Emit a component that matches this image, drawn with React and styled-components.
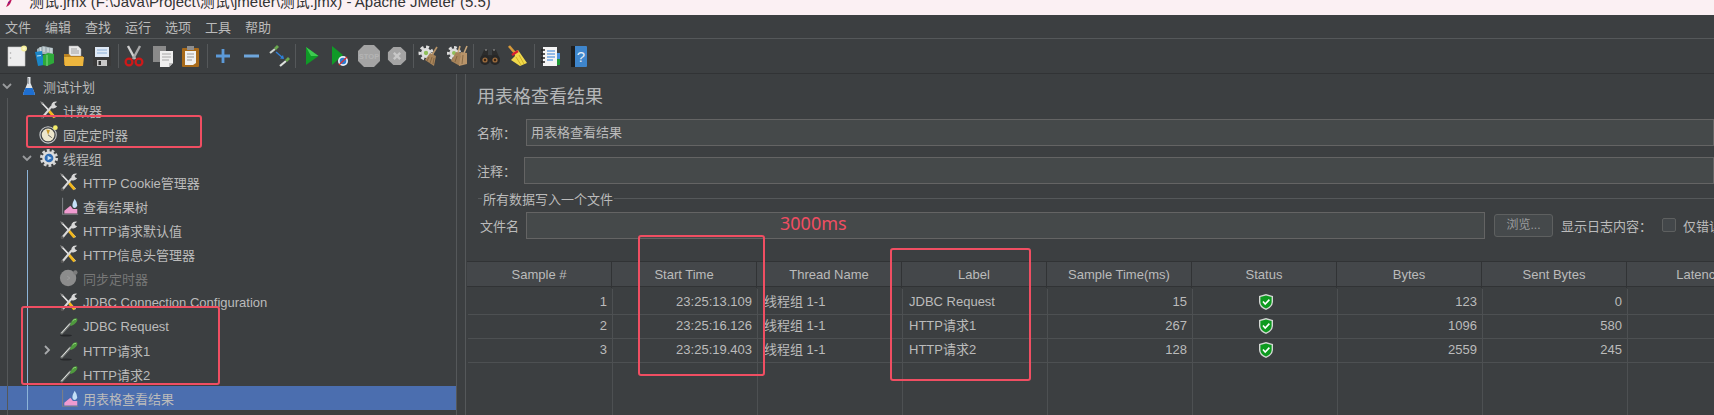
import { Fragment } from "react";
import styled, { createGlobalStyle } from "styled-components";

const CJK = '"Noto Sans CJK SC", sans-serif';

const GlobalStyle = createGlobalStyle`
  html, body {
    margin: 0;
    padding: 0;
    background: #3c3f41;
  }
  * {
    box-sizing: border-box;
  }
`;

// ==================== Shell ====================
const Page = styled.div`
  position: relative;
  width: 1714px;
  height: 415px;
  overflow: hidden;
  background: #3c3f41;
  color: #bbbbbb;
  font-family: "Liberation Sans", ${CJK};
  font-size: 13px;
  display: flex;
  flex-direction: column;
`;

const TitleBar = styled.div`
  height: 15px;
  flex: none;
  display: flex;
  align-items: flex-end;
  overflow: hidden;
  background: #fbf0f3;
  padding-left: 5px;
`;

const TitleText = styled.div`
  margin-left: 15px;
  font-size: 15px;
  line-height: 22px;
  margin-bottom: 2px;
  color: #333;
  white-space: nowrap;
`;

const MenuBar = styled.div`
  height: 23px;
  flex: none;
  display: flex;
  align-items: flex-start;
  padding-left: 5px;
  gap: 14px;
`;

const MenuItem = styled.div`
  width: 26px;
  line-height: 25px;
  font-size: 13px;
  white-space: nowrap;
`;

const Toolbar = styled.div`
  height: 36px;
  flex: none;
  display: flex;
  align-items: center;
  padding-left: 3px;
  border-top: 1px solid #55585a;
  border-bottom: 1px solid #313335;
`;

const ToolButton = styled.div`
  width: 28.3px;
  height: 24px;
  display: flex;
  align-items: center;
  justify-content: center;
`;

const ToolSep = styled.div`
  width: 1px;
  height: 24px;
  margin: 0 1.5px;
  background: #55585a;
`;

const Body = styled.div`
  flex: 1;
  display: flex;
  min-height: 0;
`;

// ==================== Tree ====================
const Tree = styled.div`
  position: relative;
  width: 457px;
  flex: none;
  border-right: 1px solid #55585a;
`;

const TreeRow = styled.div`
  height: 24px;
  display: flex;
  align-items: center;
  padding-left: ${({ $level }) => $level * 20 + 1}px;
  background: ${({ $selected }) => ($selected ? "#4b6eaf" : "transparent")};
  color: ${({ $disabled }) => ($disabled ? "#777777" : "#bbbbbb")};
  white-space: nowrap;
`;

const Chevron = styled.div`
  width: 12px;
  height: 12px;
  flex: none;
  margin-right: 5px;
  display: flex;
  align-items: center;
  justify-content: center;
`;

const TreeIcon = styled.div`
  width: 22px;
  height: 22px;
  flex: none;
  margin-right: 3px;
  display: flex;
  align-items: center;
  justify-content: center;
`;

const Guide = styled.div`
  position: absolute;
  width: 1px;
  left: ${({ $left }) => $left}px;
  top: ${({ $top }) => $top}px;
  bottom: ${({ $bottom }) => $bottom}px;
  background: ${({ $color }) => $color};
`;

// ==================== Result panel ====================
const Pane = styled.div`
  flex: 1;
  min-width: 0;
  margin-left: 8px;
  border-left: 1px solid #55585a;
  display: flex;
  flex-direction: column;
`;

const Form = styled.div`
  padding-left: 11px;
  display: flex;
  flex-direction: column;
`;

const PaneTitle = styled.div`
  height: 45px;
  font-size: 18px;
  line-height: 47px;
  color: #b4b6b8;
`;

const FieldRow = styled.div`
  display: flex;
  align-items: center;
  height: 27px;
  margin-bottom: ${({ $gap }) => $gap || 0}px;
`;

const FieldLabel = styled.div`
  flex: none;
  width: ${({ $width }) => $width}px;
  padding-left: ${({ $indent }) => $indent || 0}px;
  white-space: nowrap;
`;

const TextInput = styled.div`
  flex: ${({ $fixed }) => ($fixed ? "none" : "1")};
  width: ${({ $fixed }) => ($fixed ? `${$fixed}px` : "auto")};
  height: 27px;
  padding-left: 4px;
  line-height: 25px;
  background: #45494a;
  border: 1px solid #646464;
`;

const Legend = styled.div`
  height: 14px;
  margin: 7px 0 7px 1px;
  display: flex;
  align-items: center;
  gap: 1px;
`;

const LegendLine = styled.div`
  height: 1px;
  background: #55585a;
  flex: ${({ $grow }) => ($grow ? "1" : "none")};
  width: ${({ $grow }) => ($grow ? "auto" : "4px")};
`;

const BrowseButton = styled.div`
  flex: none;
  width: 59px;
  height: 23px;
  margin-left: 9px;
  border: 1px solid #5e6060;
  border-radius: 3px;
  background: #45494b;
  color: #9a9c9e;
  font-size: 12px;
  line-height: 21px;
  text-align: center;
`;

const LogLabel = styled.div`
  flex: none;
  width: 101px;
  margin-left: 8px;
  white-space: nowrap;
`;

const CheckBox = styled.div`
  flex: none;
  width: 14px;
  height: 14px;
  margin-top: -2px;
  border: 1px solid #5e6060;
  border-radius: 2px;
  background: #43474a;
`;

const CheckLabel = styled.div`
  margin-left: 7px;
  white-space: nowrap;
`;

// ==================== Table ====================
const Table = styled.div`
  margin-top: 22px;
  margin-left: 1px;
  flex: 1;
  display: flex;
  flex-direction: column;
  min-height: 0;
`;

const HeaderRow = styled.div`
  display: grid;
  grid-template-columns: repeat(9, 145px);
  height: 26px;
  flex: none;
  background: #44474a;
  border-top: 1px solid #313335;
  border-bottom: 1px solid #313335;
`;

const HeaderCell = styled.div`
  text-align: center;
  line-height: 26px;
  border-right: 1px solid #313335;
  white-space: nowrap;
`;

const DataRows = styled.div`
  margin-top: 2px;
  margin-left: 1px;
`;

const DataRow = styled.div`
  display: grid;
  grid-template-columns: repeat(9, 145px);
  height: ${({ $height }) => $height || 24}px;
`;

const DataCell = styled.div`
  border-right: 1px solid #4d5052;
  border-bottom: ${({ $open }) => ($open ? "none" : "1px solid #4d5052")};
  padding: 0 5px 0 6px;
  line-height: 25px;
  text-align: ${({ $align }) => $align || "left"};
  white-space: nowrap;
  display: ${({ $center }) => ($center ? "flex" : "block")};
  align-items: center;
  justify-content: center;
`;

// ==================== Annotations ====================
const Mark = styled.div`
  position: absolute;
  left: ${({ $x }) => $x}px;
  top: ${({ $y }) => $y}px;
  width: ${({ $w }) => $w}px;
  height: ${({ $h }) => $h}px;
  border: 2px solid #f04e62;
  border-radius: 3px;
  pointer-events: none;
`;

const MarkNote = styled.div`
  position: absolute;
  left: 780px;
  top: 210px;
  font-family: "Noto Sans", sans-serif;
  font-size: 18px;
  line-height: 26px;
  color: #f04e62;
`;

// ==================== Icons ====================
const Svg = ({ size = 22, children }) => (
  <svg width={size} height={size} viewBox="0 0 22 22">
    {children}
  </svg>
);

const FeatherSvg = styled.svg`
  flex: none;
  margin-bottom: 8px;
`;

const FeatherIcon = () => (
  <FeatherSvg width="9" height="8" viewBox="0 0 9 8">
    <path d="M7 0 C4 1 3 3 2 6 L1 8 L3 7 C5 6 6 3 7 0Z" fill="#c2185b" />
    <path d="M3 4 L5 3" stroke="#6a1b9a" strokeWidth="1" />
  </FeatherSvg>
);

const DownArrow = () => (
  <svg width="12" height="12" viewBox="0 0 12 12">
    <path d="M2 4 L6 8 L10 4" fill="none" stroke="#9a9c9e" strokeWidth="1.8" />
  </svg>
);

const RightArrow = () => (
  <svg width="12" height="12" viewBox="0 0 12 12">
    <path d="M4 2 L8 6 L4 10" fill="none" stroke="#a8aaac" strokeWidth="1.8" />
  </svg>
);

const NewIcon = () => (
  <Svg>
    <path d="M2 2 H19 V21 H2Z" fill="#eeeeee" stroke="#c8c8c8" strokeWidth="0.6" />
    <circle cx="4.5" cy="8" r="0.8" fill="#aaa" />
    <circle cx="4.5" cy="13" r="0.8" fill="#aaa" />
    <circle cx="18" cy="3.5" r="3" fill="#f5ee9a" />
    <circle cx="18" cy="3.5" r="1.6" fill="#fff9c4" />
  </Svg>
);

const TemplatesIcon = () => (
  <Svg>
    <path d="M3 4 L9 1 L19 3 L19 9 L3 9Z" fill="#a4b2b8" />
    <path d="M6 2 L7 7 M10 2 L10 7 M14 3 L14 7 M17 3 L17 8" stroke="#d8e0e2" strokeWidth="1.2" />
    <path d="M1 7 L8 6 L10 20 L4 21Z" fill="#1a86c8" />
    <path d="M9 10 L14 8 L20 9 L20 18 L13 21 L9 20Z" fill="#2eaa3a" />
    <path d="M13 10 L13 21" stroke="#77d37b" strokeWidth="1.2" />
    <path d="M3 11 L7 10.5" stroke="#bfe4f6" strokeWidth="1.2" />
  </Svg>
);

const OpenIcon = () => (
  <Svg>
    <path d="M6 1 H15 L18 4 V11 H6Z" fill="#e8e8e8" stroke="#a8a8a8" strokeWidth="0.5" />
    <path d="M8 4 H14 M8 6 H16 M8 8 H16" stroke="#8f8f8f" strokeWidth="0.8" />
    <path d="M1 9 H6 L8 11 H20 V20 H1Z" fill="#b98222" />
    <path d="M1 12 H21 L20 21 H2Z" fill="#edb63e" />
  </Svg>
);

const SaveIcon = () => (
  <Svg>
    <path d="M2 2 H20 V21 H2Z" fill="#3a3a3a" />
    <rect x="4" y="2" width="14" height="10" fill="#dfe9f5" />
    <path d="M6 5 H16 M6 8 H16" stroke="#8cb0d8" strokeWidth="1" />
    <rect x="6" y="15" width="10" height="6" fill="#c8c8c8" />
    <rect x="7.5" y="16" width="2.5" height="4" fill="#333" />
  </Svg>
);

const CutIcon = () => (
  <Svg>
    <path d="M5 1 L12 14" stroke="#d0d0d0" strokeWidth="2.4" />
    <path d="M17 1 L10 14" stroke="#a8a8a8" strokeWidth="2.4" />
    <circle cx="6" cy="17" r="3.4" fill="none" stroke="#d01818" strokeWidth="2.2" />
    <circle cx="16" cy="17" r="3.4" fill="none" stroke="#d01818" strokeWidth="2.2" />
  </Svg>
);

const CopyIcon = () => (
  <Svg>
    <rect x="1" y="1" width="13" height="16" fill="#8a8a8a" />
    <path d="M8 6 H21 V18 L17 22 H8Z" fill="#efefef" />
    <path d="M10 9 H19 M10 12 H19 M10 15 H17" stroke="#a0a0a0" strokeWidth="0.9" />
    <path d="M17 22 V18 H21Z" fill="#bdbdbd" />
  </Svg>
);

const PasteIcon = () => (
  <Svg>
    <rect x="2" y="3" width="17" height="19" rx="1" fill="#a86a1a" />
    <rect x="7" y="1" width="7" height="4" fill="#8e8e8e" />
    <path d="M5 6 H16 V18 L13 20 H5Z" fill="#f0f0f0" />
    <path d="M7 9 H14 M7 12 H14 M7 15 H12" stroke="#909090" strokeWidth="0.9" />
  </Svg>
);

const PlusIcon = () => (
  <Svg>
    <path d="M11 4 V18 M4 11 H18" stroke="#5c9ad8" strokeWidth="2.8" />
  </Svg>
);

const MinusIcon = () => (
  <Svg>
    <path d="M3 11 H18" stroke="#6ea6dc" strokeWidth="3" />
  </Svg>
);

const ToggleIcon = () => (
  <Svg>
    <path d="M1 8 L6 4" stroke="#cfd4cf" strokeWidth="2.2" />
    <path d="M6 4 L9 1" stroke="#6aa84f" strokeWidth="2.8" />
    <path d="M11 21 L17 16" stroke="#dfe2df" strokeWidth="2.2" />
    <path d="M17 16 L20 13" stroke="#6aa84f" strokeWidth="2.8" />
    <path d="M7 7 L14 13" stroke="#2f80d8" strokeWidth="1.4" />
    <path d="M15 14 L11 13.5 L14 10Z" fill="#2f80d8" />
  </Svg>
);

const PlayIcon = () => (
  <Svg>
    <path d="M5 2 L17.5 11 L5 20Z" fill="#109a27" />
    <path d="M5 2 L17.5 11 L10 11Z" fill="#3ecb50" />
  </Svg>
);

const PlayNoPauseIcon = () => (
  <Svg>
    <path d="M3 1 L14 10 L3 20Z" fill="#109a27" />
    <circle cx="14" cy="16" r="5" fill="#e8f0fa" />
    <circle cx="14" cy="16" r="3.3" fill="#2c7dd2" />
    <path d="M10 20 L18 12" stroke="#d83030" strokeWidth="1.3" />
  </Svg>
);

const StopIcon = () => (
  <svg width="24" height="24" viewBox="0 0 24 24">
    <path d="M7 1 H17 L23 7 V17 L17 23 H7 L1 17 V7Z" fill="#a4a4a4" />
    <text x="12" y="15" textAnchor="middle" fontSize="7.5" fontWeight="700" fill="#b4b4b4" fontFamily="Liberation Sans, sans-serif">
      STOP
    </text>
  </svg>
);

const ShutdownIcon = () => (
  <Svg size={20}>
    <path d="M7 1 H15 L21 7 V15 L15 21 H7 L1 15 V7Z" fill="#a4a4a4" />
    <path d="M7.5 7.5 L14.5 14.5 M14.5 7.5 L7.5 14.5" stroke="#c8c8c8" strokeWidth="2.6" />
  </Svg>
);

const Gear = ({ cx, cy, r, fill = "#dedede", hub = "#8fbf5a" }) => (
  <g>
    <circle cx={cx} cy={cy} r={r} fill="none" stroke={fill} strokeWidth={r * 0.5} strokeDasharray={`${r * 0.5} ${r * 0.42}`} />
    <circle cx={cx} cy={cy} r={r * 0.82} fill={fill} />
    <circle cx={cx} cy={cy} r={r * 0.36} fill={hub} />
  </g>
);

const ClearIcon = () => (
  <Svg>
    <Gear cx={8} cy={8} r={6} />
    <path d="M19 2 L14 10" stroke="#b89468" strokeWidth="1.6" />
    <path d="M12 8 L18 11 L16 21 L7 15Z" fill="#a8845a" />
    <path d="M11 12 L9 16 M14 12 L12 18 M16 13 L15 19" stroke="#7b5f3e" strokeWidth="0.8" />
  </Svg>
);

const ClearAllIcon = () => (
  <Svg>
    <Gear cx={7} cy={8} r={5.6} />
    <path d="M13 1 L11 8 M20 1 L17 8" stroke="#c8a67a" strokeWidth="1.6" />
    <path d="M9 7 L14 8 L13 21 L4 16Z" fill="#a8845a" />
    <path d="M14 7 L20 8 L20 19 L12 21Z" fill="#b8946a" />
    <path d="M10 11 L8 17 M16 10 L15 19" stroke="#7b5f3e" strokeWidth="0.8" />
  </Svg>
);

const BinocularIcon = () => (
  <Svg>
    <path d="M5 5 H9 V10 H13 V5 H17 L21 14 H1Z" fill="#2c2c2c" />
    <circle cx="6" cy="15" r="5" fill="#272727" />
    <circle cx="16" cy="15" r="5" fill="#272727" />
    <circle cx="6" cy="15" r="2.6" fill="#9a6a3c" />
    <circle cx="16" cy="15" r="2.6" fill="#9a6a3c" />
    <circle cx="6" cy="15" r="1.2" fill="#3a2514" />
    <circle cx="16" cy="15" r="1.2" fill="#3a2514" />
    <path d="M6 5 H8 M14 5 H16" stroke="#9a9a9a" strokeWidth="1" />
  </Svg>
);

const BroomIcon = () => (
  <Svg>
    <path d="M2 1 L8 8" stroke="#d89a3a" strokeWidth="2.6" />
    <path d="M7 7 L11 5 L20 18 L13 21 L4 15 L8 11Z" fill="#f1d94a" />
    <path d="M5 10 L11 6" stroke="#d81f2f" strokeWidth="2.4" />
    <path d="M9 12 L14 20 M12 10 L17 19" stroke="#c4a51f" strokeWidth="0.8" />
  </Svg>
);

const LogIcon = () => (
  <Svg>
    <rect x="4" y="2" width="14" height="19" fill="#f4f4f4" />
    <path d="M2 5 H6 M2 9 H6 M2 13 H6 M2 17 H6" stroke="#222" strokeWidth="1.4" />
    <path d="M8 6 H16 M8 9 H16 M8 12 H16 M8 15 H14" stroke="#2f7fd8" strokeWidth="1.2" />
    <rect x="18" y="8" width="3" height="6" fill="#4a90d8" />
    <rect x="18" y="14" width="3" height="6" fill="#1e9a36" />
  </Svg>
);

const HelpIcon = () => (
  <Svg>
    <rect x="3" y="1" width="16" height="21" rx="1" fill="#3f86cc" />
    <rect x="3" y="1" width="4" height="21" fill="#1e1e1e" />
    <text x="13" y="17" textAnchor="middle" fontSize="15" fill="#e4edf6" fontFamily="Liberation Sans, sans-serif">
      ?
    </text>
  </Svg>
);

const FlaskIcon = () => (
  <Svg>
    <path d="M9.5 2 H12.5 V8 L17 19 Q17 20 16 20 H6 Q5 20 5 19 L9.5 8Z" fill="#dfe3e7" />
    <path d="M7.4 13 H14.6 L17 19 Q17 20 16 20 H6 Q5 20 5 19Z" fill="#1f6fd0" />
    <path d="M10.5 3 V9" stroke="#8f969c" strokeWidth="0.8" />
  </Svg>
);

const ToolsIcon = () => (
  <Svg size={20}>
    <path d="M3 3 L18 19" stroke="#e8e8e8" strokeWidth="1.8" />
    <path d="M1 1 L5 3 L3 5Z" fill="#888" />
    <path d="M11 12 L17 19" stroke="#f1b71c" strokeWidth="3" />
    <path d="M3 20 L14 7" stroke="#d8d8d8" strokeWidth="2.4" />
    <path d="M13 8 L14 4 Q16 1 20 2 L17 4 L18 6 L20 7 Q18 10 14 9Z" fill="#d8d8d8" />
    <circle cx="3.5" cy="19.5" r="1.6" fill="#555" />
  </Svg>
);

const TimerIcon = () => (
  <Svg size={20}>
    <circle cx="10" cy="12" r="9" fill="#3f4244" stroke="#c8cacc" strokeWidth="1.2" />
    <circle cx="10" cy="12" r="7" fill="#ece6cc" />
    <path d="M10 12 L8 6 L12 7Z" fill="#c99a2e" />
    <path d="M10 12 L14 15" stroke="#555" strokeWidth="1" />
    <circle cx="18" cy="4" r="2.6" fill="#f5ee6a" />
  </Svg>
);

const ThreadsIcon = () => (
  <Svg size={20}>
    <circle cx="11" cy="11" r="8.2" fill="none" stroke="#d4d4d4" strokeWidth="3.4" strokeDasharray="3 2.15" />
    <circle cx="11" cy="11" r="7.4" fill="#dcdcdc" />
    <circle cx="11" cy="11" r="4.8" fill="#2e6cb4" />
    <path d="M9.5 8.5 L14 11 L9.5 13.5Z" fill="#c8e0f5" />
  </Svg>
);

const ListenerIcon = () => (
  <Svg size={19}>
    <path d="M3 1 V20 H21" fill="none" stroke="#7d8084" strokeWidth="1.2" />
    <path d="M5 19 V16 L12 10 L15 14 H20 V19Z" fill="#ef9bd0" />
    <path d="M17 2 Q20 6 20 10 Q18 14 15 12 Q13 9 17 2Z" fill="#c4e0f7" />
  </Svg>
);

const SyncIcon = () => (
  <Svg size={20}>
    <circle cx="10" cy="11" r="9" fill="#8c8c8c" />
    <path d="M9 9 L12 11 L9 13" stroke="#9e9e9e" fill="none" strokeWidth="1" />
    <circle cx="18" cy="5" r="2.4" fill="#7c7c7c" />
  </Svg>
);

const PipetteIcon = () => (
  <Svg>
    <ellipse cx="8" cy="20.5" rx="6" ry="0.9" fill="#26282a" />
    <path d="M3 19 L13 8" stroke="#777b78" strokeWidth="2.6" />
    <path d="M3.5 18 L12 8.5" stroke="#e4e6e4" strokeWidth="1" />
    <path d="M12 10 L13.5 6.5 Q16 2 19 3.5 Q20.5 6 16 9.5 L13 11Z" fill="#4f9a3e" />
    <path d="M14.5 6 Q16 4 18 4.5" stroke="#8ed276" strokeWidth="1" fill="none" />
  </Svg>
);

const ShieldIcon = () => (
  <svg width="14" height="16" viewBox="0 0 14 16">
    <path d="M7 0 L14 2 V8 Q14 13 7 16 Q0 13 0 8 V2Z" fill="#d5d8d5" />
    <path d="M7 1.5 L12.6 3 V8 Q12.6 12 7 14.5 Q1.4 12 1.4 8 V3Z" fill="#0d9a1f" />
    <path d="M4 7.5 L6.2 10 L10.4 5.6" fill="none" stroke="#ffffff" strokeWidth="1.6" />
  </svg>
);

// ==================== Data ====================
const MENU = ["文件", "编辑", "查找", "运行", "选项", "工具", "帮助"];

const TOOLS = [
  [NewIcon, TemplatesIcon, OpenIcon, SaveIcon],
  [CutIcon, CopyIcon, PasteIcon],
  [PlusIcon, MinusIcon, ToggleIcon],
  [PlayIcon, PlayNoPauseIcon, StopIcon, ShutdownIcon],
  [ClearIcon, ClearAllIcon],
  [BinocularIcon, BroomIcon],
  [LogIcon, HelpIcon],
];

const TREE = [
  { text: "测试计划", level: 0, icon: FlaskIcon, arrow: "down" },
  { text: "计数器", level: 1, icon: ToolsIcon },
  { text: "固定定时器", level: 1, icon: TimerIcon },
  { text: "线程组", level: 1, icon: ThreadsIcon, arrow: "down" },
  { text: "HTTP Cookie管理器", level: 2, icon: ToolsIcon },
  { text: "查看结果树", level: 2, icon: ListenerIcon },
  { text: "HTTP请求默认值", level: 2, icon: ToolsIcon },
  { text: "HTTP信息头管理器", level: 2, icon: ToolsIcon },
  { text: "同步定时器", level: 2, icon: SyncIcon, disabled: true },
  { text: "JDBC Connection Configuration", level: 2, icon: ToolsIcon },
  { text: "JDBC Request", level: 2, icon: PipetteIcon },
  { text: "HTTP请求1", level: 2, icon: PipetteIcon, arrow: "right" },
  { text: "HTTP请求2", level: 2, icon: PipetteIcon },
  { text: "用表格查看结果", level: 2, icon: ListenerIcon, selected: true },
];

const COLUMNS = [
  "Sample #",
  "Start Time",
  "Thread Name",
  "Label",
  "Sample Time(ms)",
  "Status",
  "Bytes",
  "Sent Bytes",
  "Latency",
];

const ROWS = [
  ["1", "23:25:13.109", "线程组 1-1", "JDBC Request", "15", "123", "0"],
  ["2", "23:25:16.126", "线程组 1-1", "HTTP请求1", "267", "1096", "580"],
  ["3", "23:25:19.403", "线程组 1-1", "HTTP请求2", "128", "2559", "245"],
];

const MARKS = [
  { x: 26, y: 115, w: 176, h: 33 },
  { x: 21, y: 306, w: 199, h: 79 },
  { x: 638, y: 235, w: 127, h: 141 },
  { x: 890, y: 248, w: 141, h: 133 },
];

export default function App() {
  return (
    <Page>
      <GlobalStyle />
      <TitleBar>
        <FeatherIcon />
        <TitleText>测试.jmx (F:\Java\Project\测试\jmeter\测试.jmx) - Apache JMeter (5.5)</TitleText>
      </TitleBar>
      <MenuBar>
        {MENU.map((item) => (
          <MenuItem key={item}>{item}</MenuItem>
        ))}
      </MenuBar>
      <Toolbar>
        {TOOLS.map((group, i) => (
          <Fragment key={i}>
            {i > 0 && <ToolSep />}
            {group.map((Icon, j) => (
              <ToolButton key={j}>
                <Icon />
              </ToolButton>
            ))}
          </Fragment>
        ))}
      </Toolbar>
      <Body>
        <Tree>
          {TREE.map((row) => (
            <TreeRow key={row.text} $level={row.level} $selected={row.selected} $disabled={row.disabled}>
              <Chevron>
                {row.arrow === "down" && <DownArrow />}
                {row.arrow === "right" && <RightArrow />}
              </Chevron>
              <TreeIcon>
                <row.icon />
              </TreeIcon>
              {row.text}
            </TreeRow>
          ))}
          <Guide $left={7} $top={24} $bottom={0} $color="#55585a" />
          <Guide $left={27} $top={96} $bottom={5} $color="#8db4d8" />
        </Tree>
        <Pane>
          <Form>
            <PaneTitle>用表格查看结果</PaneTitle>
            <FieldRow $gap={11}>
              <FieldLabel $width={49}>名称：</FieldLabel>
              <TextInput>用表格查看结果</TextInput>
            </FieldRow>
            <FieldRow>
              <FieldLabel $width={47}>注释：</FieldLabel>
              <TextInput />
            </FieldRow>
            <Legend>
              <LegendLine />
              所有数据写入一个文件
              <LegendLine $grow />
            </Legend>
            <FieldRow>
              <FieldLabel $width={49} $indent={3}>文件名</FieldLabel>
              <TextInput $fixed={959} />
              <BrowseButton>浏览...</BrowseButton>
              <LogLabel>显示日志内容：</LogLabel>
              <CheckBox />
              <CheckLabel>仅错误日志</CheckLabel>
            </FieldRow>
          </Form>
          <Table>
            <HeaderRow>
              {COLUMNS.map((col) => (
                <HeaderCell key={col}>{col}</HeaderCell>
              ))}
            </HeaderRow>
            <DataRows>
              {ROWS.map((row) => (
                <DataRow key={row[0]}>
                  <DataCell $align="right">{row[0]}</DataCell>
                  <DataCell $align="right">{row[1]}</DataCell>
                  <DataCell>{row[2]}</DataCell>
                  <DataCell>{row[3]}</DataCell>
                  <DataCell $align="right">{row[4]}</DataCell>
                  <DataCell $center>
                    <ShieldIcon />
                  </DataCell>
                  <DataCell $align="right">{row[5]}</DataCell>
                  <DataCell $align="right">{row[6]}</DataCell>
                  <DataCell />
                </DataRow>
              ))}
              <DataRow $height={60}>
                {COLUMNS.map((col) => (
                  <DataCell key={col} $open />
                ))}
              </DataRow>
            </DataRows>
          </Table>
        </Pane>
      </Body>
      {MARKS.map((m) => (
        <Mark key={`${m.x}-${m.y}`} $x={m.x} $y={m.y} $w={m.w} $h={m.h} />
      ))}
      <MarkNote>3000ms</MarkNote>
    </Page>
  );
}
